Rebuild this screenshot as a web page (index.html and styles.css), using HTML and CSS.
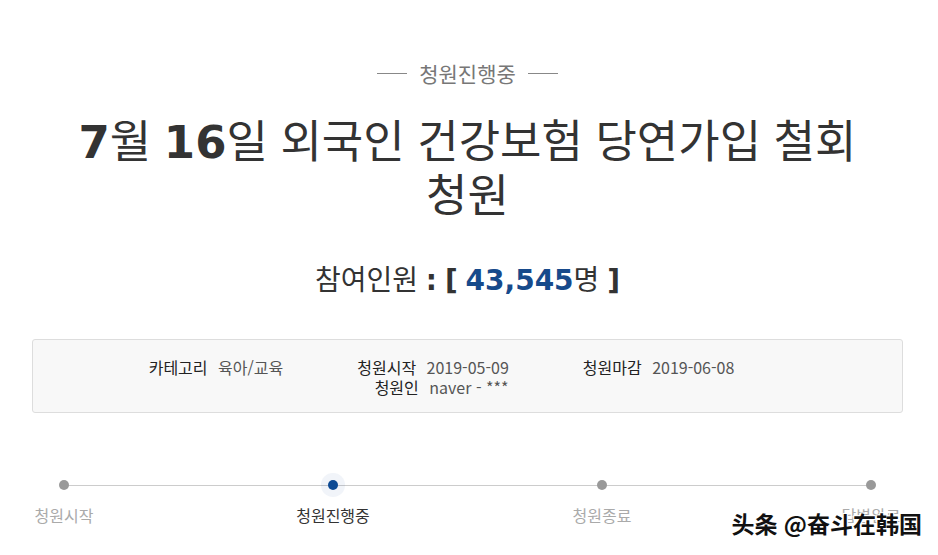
FILE: index.html
```html
<!DOCTYPE html>
<html lang="ko">
<head>
    <meta charset="UTF-8">
    <meta name="viewport" content="width=device-width, initial-scale=1.0">
    <title>청원진행중</title>
    <link rel="stylesheet" href="styles.css">
</head>
<body>

<div class="petition">
    <p class="state"><span class="dash"></span>청원진행중<span class="dash"></span></p>

    <h1 class="title"><b>7</b>월 <b>16</b>일 외국인 건강보험 당연가입 철회<br>청원</h1>

    <p class="count">참여인원 <b>:</b> <b>[</b> <span class="num">43,545</span>명 <b>]</b></p>

    <ul class="info">
        <li><span class="label">카테고리</span> 육아/교육</li>
        <li><span class="label">청원시작</span> 2019-05-09</li>
        <li><span class="label">청원마감</span> 2019-06-08</li>
        <li class="writer"><span class="label">청원인</span> naver - ***</li>
    </ul>

    <div class="steps">
        <div class="step"><span class="dot"></span><span class="name">청원시작</span></div>
        <div class="step on"><span class="dot"></span><span class="name">청원진행중</span></div>
        <div class="step"><span class="dot"></span><span class="name">청원종료</span></div>
        <div class="step"><span class="dot"></span><span class="name">답변완료</span></div>
    </div>
</div>

<div class="mark">头条 @奋斗在韩国</div>

</body>
</html>
```

FILE: styles.css
```css
* {
    box-sizing: border-box;
}

body {
    margin: 0;
    background: #fff;
    color: #333;
    font-family: "Noto Sans CJK KR", "Noto Sans", sans-serif;
    position: relative;
    height: 555px;
    overflow: hidden;
}

.petition {
    padding: 61px 35px 0 32px;
}

.state {
    margin: 0;
    display: flex;
    justify-content: center;
    align-items: center;
    gap: 12px;
    font-size: 21px;
    line-height: 24px;
    color: #777;
}

.dash {
    display: block;
    width: 30px;
    height: 1px;
    background: #888;
}

.title {
    margin: 29px 0 0;
    text-align: center;
    font-size: 45px;
    line-height: 50px;
    font-weight: normal;
    color: #333;
}

.title b {
    font-family: "DejaVu Sans", sans-serif;
    font-weight: bold;
}

.count {
    margin: 42px 0 0;
    text-align: center;
    font-size: 28px;
    line-height: 36px;
    color: #333;
}

.count b {
    font-family: "DejaVu Sans", sans-serif;
    font-weight: bold;
}

.count .num {
    font-family: "DejaVu Sans", sans-serif;
    font-weight: bold;
    color: #174a8b;
}

.info {
    list-style: none;
    margin: 40px 0 0;
    padding: 17px 52px 15px 0;
    display: flex;
    flex-wrap: wrap;
    justify-content: center;
    column-gap: 74px;
    background: #f8f8f8;
    border: 1px solid #ddd;
    border-radius: 3px;
    font-size: 16px;
    line-height: 20px;
    color: #555;
}

.info li {
    white-space: nowrap;
}

.info .label {
    color: #222;
    margin-right: 6px;
}

.info .writer {
    flex-basis: 100%;
    text-align: center;
}

.steps {
    margin-top: 67px;
    display: flex;
    justify-content: space-between;
    position: relative;
}

.steps::before {
    content: "";
    position: absolute;
    left: 32px;
    right: 32px;
    top: 5px;
    height: 1px;
    background: #ccc;
}

.step {
    width: 64px;
    display: flex;
    flex-direction: column;
    align-items: center;
    position: relative;
}

.dot {
    width: 10px;
    height: 10px;
    border-radius: 50%;
    background: #999;
}

.step.on .dot {
    background: #0d4a94;
    box-shadow: 0 0 0 7px rgba(13, 74, 148, 0.06);
}

.name {
    margin-top: 15px;
    font-size: 16px;
    line-height: 20px;
    white-space: nowrap;
    color: #aaa;
}

.step.on .name {
    color: #333;
}

.mark {
    position: absolute;
    right: 16px;
    bottom: 18px;
    font-family: "Noto Sans CJK SC", sans-serif;
    font-weight: bold;
    font-size: 23px;
    line-height: 28px;
    color: #111;
    text-shadow: 1px 1px 0 #fff, -1px -1px 0 #fff, 1px -1px 0 #fff, -1px 1px 0 #fff;
}
```
